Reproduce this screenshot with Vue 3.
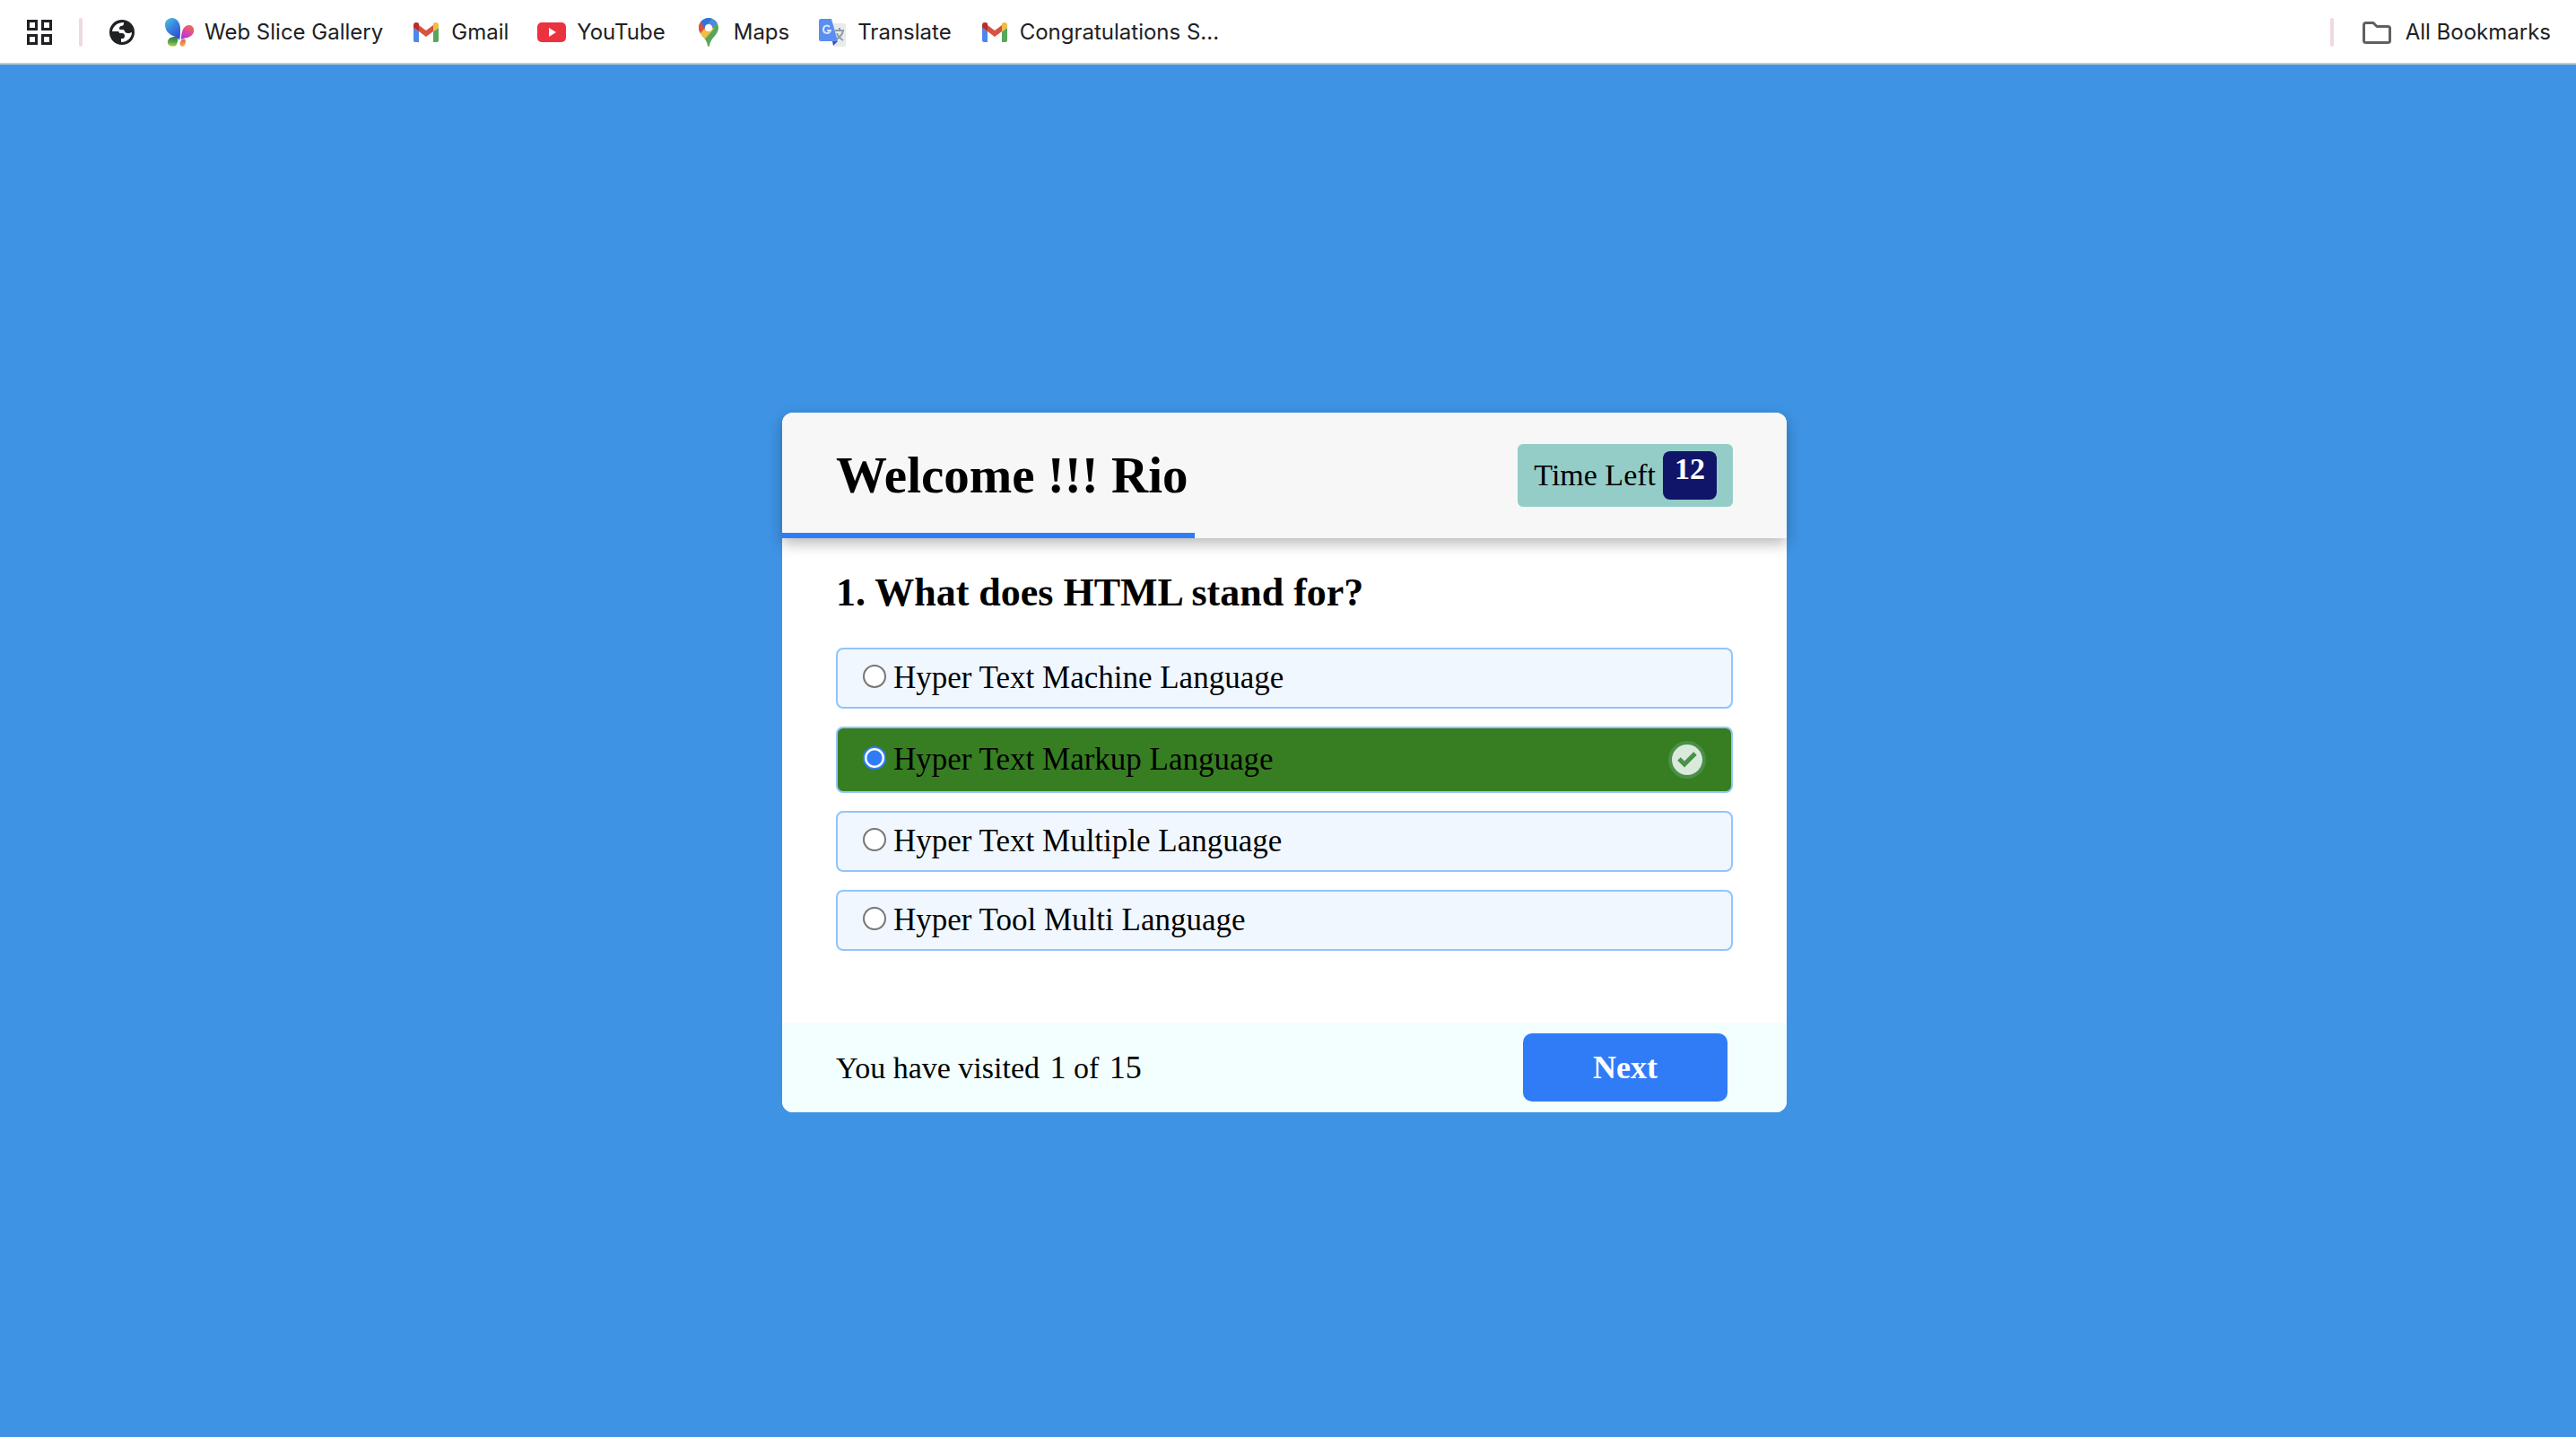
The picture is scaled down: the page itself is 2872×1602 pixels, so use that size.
<script setup>
import { ref } from 'vue'

const bookmarks = [
  { icon: 'butterfly', label: 'Web Slice Gallery' },
  { icon: 'gmail', label: 'Gmail' },
  { icon: 'youtube', label: 'YouTube' },
  { icon: 'maps', label: 'Maps' },
  { icon: 'translate', label: 'Translate' },
  { icon: 'gmail', label: 'Congratulations S...' }
]

const userName = 'Rio'
const secondsLeft = ref(12)
const progress = ref(460 / 11.2)
const question = {
  number: 1,
  total: 15,
  text: 'What does HTML stand for?',
  options: [
    'Hyper Text Machine Language',
    'Hyper Text Markup Language',
    'Hyper Text Multiple Language',
    'Hyper Tool Multi Language'
  ],
  answer: 1
}
const chosen = ref(1)
</script>

<template>
  <div class="window">
    <nav class="bookmarks">
      <button class="tool" type="button" aria-label="Apps">
        <svg viewBox="0 0 28 28" width="28" height="28" fill="none" stroke="#202124" stroke-width="3">
          <path d="M1.5 1.5h9v9h-9zM17.5 1.5h9v9h-9zM1.5 17.5h9v9h-9zM17.5 17.5h9v9h-9z" />
        </svg>
      </button>
      <span class="divider"></span>
      <button class="tool" type="button" aria-label="Site">
        <svg viewBox="0 0 28 28" width="28" height="28">
          <circle cx="14" cy="14" r="14" fill="#202124" />
          <path fill="#fff" d="M3 13C4 7 9 3 16 3v1c0 2-1 3-3 3-1 0-2 1-2 3 0 1 1 1 3 1h1c1 0 2 1 2 2 1 2 3 2 5 2l3-1c0 6-5 11-12 11v-4h2c1 0 2-1 2-3 0-2-1-3-3-3h-3c0-2-1-2-3-2z" />
        </svg>
      </button>
      <a v-for="item in bookmarks" :key="item.label" class="bookmark" href="#">
        <svg v-if="item.icon === 'butterfly'" viewBox="0 0 32 32" width="32" height="32">
          <defs>
            <linearGradient id="wingBlue" x1="0" y1="0" x2="0.6" y2="1">
              <stop offset="0" stop-color="#55c3e0" />
              <stop offset="0.5" stop-color="#3a85df" />
              <stop offset="1" stop-color="#2f4fd0" />
            </linearGradient>
            <linearGradient id="wingPink" x1="0.7" y1="0" x2="0.2" y2="1">
              <stop offset="0" stop-color="#ee6b50" />
              <stop offset="0.55" stop-color="#d944a8" />
              <stop offset="1" stop-color="#a035e0" />
            </linearGradient>
            <linearGradient id="wingGreen" x1="0.5" y1="0" x2="0.4" y2="1">
              <stop offset="0" stop-color="#27735c" />
              <stop offset="0.5" stop-color="#4c9c48" />
              <stop offset="1" stop-color="#b5cc4c" />
            </linearGradient>
            <linearGradient id="wingOrange" x1="0.3" y1="0" x2="0.6" y2="1">
              <stop offset="0" stop-color="#e2574e" />
              <stop offset="1" stop-color="#f5b850" />
            </linearGradient>
          </defs>
          <path fill="url(#wingGreen)" d="M14 20c1 4 0 8-2 11-2 1-6 1-8-1-2-3-1-6 2-8 2-1 5-1 8-2z" />
          <path fill="url(#wingBlue)" d="M0 7c0-4 4-7 8-7 5 0 9 5 9 12 0 5 0 9-1 13-1-3-4-4-7-5C4 18 0 14 0 7z" />
          <path fill="url(#wingPink)" d="M18 24c0-8 2-16 9-16 4 0 6 4 5 8-1 3-4 5-7 6-3 0-5 1-7 2z" />
          <path fill="url(#wingOrange)" d="M18 25c2-2 5-2 5 1 0 3-1 5-3 6-4 0-4-4-2-7z" />
        </svg>
        <svg v-else-if="item.icon === 'gmail'" viewBox="0 0 32 32" width="32" height="32">
          <path fill="#4f86ec" d="M2 11l6 4v12H4c-1 0-2-1-2-2z" />
          <path fill="#58a55c" d="M24 15l6-4v14c0 1-1 2-2 2h-4z" />
          <path fill="#d95140" d="M8 8l8 6 8-6v7l-8 6-8-6z" />
          <path fill="#b3302b" d="M2 11V8c0-3 3-4 6-2v9z" />
          <path fill="#f1bd42" d="M30 11V8c0-3-3-4-6-2v9z" />
        </svg>
        <svg v-else-if="item.icon === 'youtube'" viewBox="0 0 32 32" width="32" height="32">
          <rect y="5" width="32" height="22" rx="5" fill="#eb323f" />
          <path d="M13 11l8 5-8 5z" fill="#fff" />
        </svg>
        <svg v-else-if="item.icon === 'maps'" viewBox="0 0 32 32" width="32" height="32">
          <defs>
            <clipPath id="pinShape">
              <path d="M16 0c6 0 11 5 11 11 0 8-9 11-10 20 0 1-2 1-2 0C14 22 5 19 5 11 5 5 10 0 16 0z" />
            </clipPath>
          </defs>
          <g clip-path="url(#pinShape)">
            <path fill="#58a55c" d="M0 0h32v32H0z" />
            <path fill="#f1bd42" d="M0 20L16 5l6 7L9 27z" />
            <path fill="#d95140" d="M0 0h8l7 8L5 19z" />
            <path fill="#3074e0" d="M7 4l3-5h11l-9 13z" />
            <path fill="#4f86ec" d="M22 0L12 12l4 3L27 4z" />
          </g>
          <circle cx="16" cy="11" r="4" fill="#fff" />
        </svg>
        <svg v-else viewBox="0 0 32 32" width="32" height="32">
          <path fill="#e9eaeb" d="M13 6h16c1 0 2 1 2 2v22c0 1-1 2-2 2H17z" />
          <path fill="none" stroke="#8d9da5" stroke-width="2" d="M19 14h10M24 11v3M28 14c-1 5-4 8-8 10M21 17c1 3 4 6 7 8" />
          <path fill="#3f51b5" d="M16 26h6l-5 5z" />
          <path fill="#5a8ff0" d="M3 1h12l7 25H3c-1 0-2-1-2-2V3c0-1 1-2 2-2z" />
          <path fill="none" stroke="#dbe6fb" stroke-width="2" d="M13 10c-3-3-7-1-7 3s6 6 8 1h-4" />
        </svg>
        <span>{{ item.label }}</span>
      </a>
      <span class="divider last"></span>
      <a class="bookmark folder" href="#">
        <svg viewBox="0 0 32 32" width="32" height="32" fill="none" stroke="#5f6063" stroke-width="3" stroke-linejoin="round">
          <path d="M4 5.500h8l4 4h12c2 0 2.500 1 2.500 2v14c0 1-.5 2-2.500 2H4c-2 0-2.500-1-2.500-2v-18c0-1 .5-2 2.500-2z" />
        </svg>
        <span>All Bookmarks</span>
      </a>
    </nav>

    <main class="stage">
      <section class="quiz">
        <header class="head">
          <h1>Welcome !!! {{ userName }}</h1>
          <div class="timer">
            <span>Time Left</span>
            <strong>{{ secondsLeft }}</strong>
          </div>
          <div class="progress" :style="{ width: progress + '%' }"></div>
        </header>

        <div class="body">
          <h2>{{ question.number }}. {{ question.text }}</h2>
          <div class="options">
            <label
              v-for="(option, i) in question.options"
              :key="option"
              class="option"
              :class="{ correct: chosen === i && i === question.answer }"
            >
              <input v-model="chosen" type="radio" name="answer" :value="i" />
              <span>{{ option }}</span>
              <svg v-if="chosen === i" class="tick" viewBox="0 0 42 42" width="42" height="42">
                <circle cx="21" cy="21" r="21" fill="#4a9048" />
                <circle cx="21" cy="21" r="17" fill="#d9eadb" />
                <path d="M12 20l6 6 12-12" fill="none" stroke="#4a9048" stroke-width="5" />
              </svg>
            </label>
          </div>
        </div>

        <footer class="foot">
          <p>You have visited <b>{{ question.number }}</b> of <b>{{ question.total }}</b></p>
          <button class="next" type="button">Next</button>
        </footer>
      </section>
    </main>
  </div>
</template>

<style>
body {
  margin: 0;
}
</style>

<style scoped>
.window {
  min-height: 100vh;
  display: flex;
  flex-direction: column;
  font-family: Georgia, "Liberation Serif", serif;
  color: #000;
}

.bookmarks {
  box-sizing: border-box;
  height: 72px;
  display: flex;
  align-items: center;
  padding: 2px 28px 0 30px;
  background: #fff;
  border-bottom: 2px solid #c8cacb;
  font-family: Inter, sans-serif;
  font-size: 24px;
  line-height: 32px;
  color: #202124;
  white-space: nowrap;
}

.tool {
  display: flex;
  padding: 0;
  border: 0;
  background: none;
}

.divider {
  width: 4px;
  height: 32px;
  margin: 0 30px;
  border-radius: 2px;
  background: #f0d8e4;
}

.divider.last {
  margin: 0 32px 0 auto;
}

.bookmark {
  display: flex;
  gap: 12px;
  color: inherit;
  text-decoration: none;
}

.bookmark + .bookmark {
  margin-left: 32px;
}

.tool + .bookmark {
  margin-left: 34px;
}

.bookmark.folder {
  gap: 16px;
}

.stage {
  flex: 1;
  display: flex;
  align-items: center;
  justify-content: center;
  padding: 26px 8px 0 0;
  background: #3e93e4;
}

.quiz {
  width: 1120px;
  max-width: 100%;
  border-radius: 12px;
  background: #fff;
}

.head {
  position: relative;
  display: flex;
  align-items: center;
  justify-content: space-between;
  height: 140px;
  padding: 0 60px;
  border-radius: 12px 12px 0 0;
  background: #f7f7f7;
  box-shadow: 0 6px 16px rgba(0, 0, 0, 0.28);
}

h1,
h2,
p {
  margin: 0;
}

h1 {
  font-size: 57px;
  line-height: 64px;
}

.timer {
  display: flex;
  align-items: center;
  gap: 8px;
  padding: 8px 18px;
  border-radius: 6px;
  background: #94cdc8;
  font-size: 34px;
}

.timer strong {
  box-sizing: border-box;
  width: 60px;
  height: 54px;
  padding-top: 2px;
  border-radius: 8px;
  background: #10156a;
  color: #fff;
  font-size: 34px;
  line-height: 36px;
  text-align: center;
}

.progress {
  position: absolute;
  left: 0;
  bottom: 0;
  height: 6px;
  background: #307cf7;
}

.body {
  padding: 36px 60px 80px;
}

h2 {
  font-size: 44px;
  line-height: 50px;
}

.options {
  display: flex;
  flex-direction: column;
  gap: 20px;
  margin-top: 36px;
}

.option {
  display: flex;
  align-items: center;
  padding: 12px 28px;
  border: 2px solid #93c4fb;
  border-radius: 8px;
  background: #f0f7ff;
  font-size: 35px;
  line-height: 40px;
}

.option.correct {
  padding: 14px 28px;
  background: #377d22;
}

.option input {
  appearance: none;
  box-sizing: border-box;
  width: 26px;
  height: 26px;
  margin: 0 8px 4px 0;
  border: 2px solid #767676;
  border-radius: 50%;
  background: #fff;
}

.option input:checked {
  border-color: #307cf7;
  background: radial-gradient(circle, #307cf7 8px, #fff 9px);
}

.tick {
  margin-left: auto;
}

.foot {
  display: flex;
  align-items: center;
  justify-content: space-between;
  padding: 12px 66px 12px 60px;
  border-radius: 0 0 12px 12px;
  background: #f3ffff;
  font-size: 34px;
}

.foot b {
  margin-left: 3px;
  font-size: 36px;
  font-weight: 500;
}

.next {
  width: 228px;
  height: 76px;
  border: 0;
  border-radius: 10px;
  background: #307cf7;
  color: #fff;
  font-family: inherit;
  font-size: 36px;
  font-weight: 700;
}
</style>
